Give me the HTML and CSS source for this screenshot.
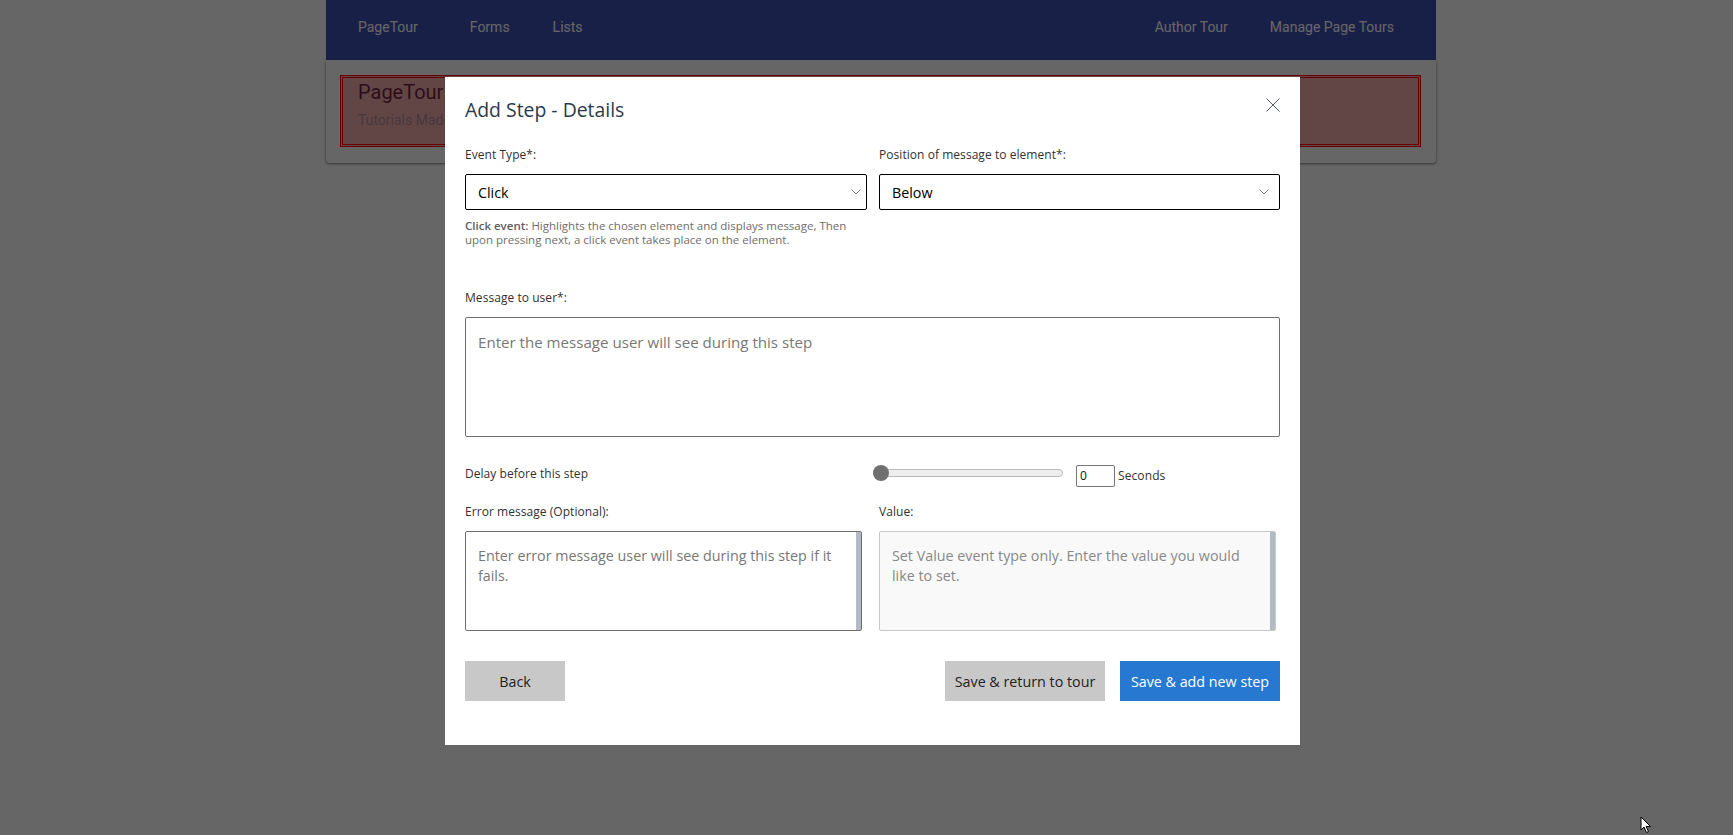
FILE: index.html
```html
<!DOCTYPE html>
<html lang="en">
<head>
<meta charset="utf-8">
<title>PageTour</title>
<link rel="stylesheet" href="styles.css">
</head>
<body>
<div class="page">
  <nav class="nav">
    <div class="nav-left">
      <a class="nav-link nav-brand">PageTour</a>
      <a class="nav-link nav-forms">Forms</a>
      <a class="nav-link">Lists</a>
    </div>
    <div class="nav-right">
      <a class="nav-link">Author Tour</a>
      <a class="nav-link">Manage Page Tours</a>
    </div>
  </nav>
  <section class="card">
    <div class="hero">
      <h1 class="hero-title">PageTour</h1>
      <p class="hero-sub">Tutorials Made Easy</p>
    </div>
  </section>
</div>

<div class="overlay">
  <div class="modal">
    <header class="modal-head">
      <h2 class="modal-title">Add Step - Details</h2>
      <svg class="close" viewBox="0 0 14 14" width="14" height="14" aria-label="Close"><path d="M.5.5l13 13M13.500.5l-13 13"/></svg>
    </header>

    <div class="row-selects">
      <div class="field">
        <div class="label">Event Type*:</div>
        <div class="select"><span>Click</span>
          <svg class="chev" viewBox="0 0 10 6" width="10" height="6"><path d="M.5.5L5 5 9.500.5"/></svg>
        </div>
        <p class="help"><b>Click event:</b> Highlights the chosen element and displays message, Then upon pressing next, a click event takes place on the element.</p>
      </div>
      <div class="field">
        <div class="label">Position of message to element*:</div>
        <div class="select"><span>Below</span>
          <svg class="chev chev-wide" viewBox="0 0 10 6" width="10" height="6"><path d="M.5.5L5 5 9.500.5"/></svg>
        </div>
      </div>
    </div>

    <div class="label">Message to user*:</div>
    <div class="area area-message">Enter the message user will see during this step</div>

    <div class="row-delay">
      <div class="label label-flat">Delay before this step</div>
      <div class="delay">
        <div class="slider"><span class="thumb"></span></div>
        <div class="num">0</div>
        <span class="seconds">Seconds</span>
      </div>
    </div>

    <div class="row-areas">
      <div class="field">
        <div class="label">Error message (Optional):</div>
        <div class="area area-small">Enter error message user will see during this step if it fails.<span class="bar"></span></div>
      </div>
      <div class="field">
        <div class="label">Value:</div>
        <div class="area area-small area-off">Set Value event type only. Enter the value you would like to set.<span class="bar"></span></div>
      </div>
    </div>

    <footer class="actions">
      <button class="btn btn-grey btn-back">Back</button>
      <button class="btn btn-grey btn-save">Save &amp; return to tour</button>
      <button class="btn btn-blue">Save &amp; add new step</button>
    </footer>
  </div>
  <svg class="cursor" viewBox="0 0 12 18" width="12" height="18"><path d="M1 1v13l3-3 2.500 5.500 2-1L6 10.500h4.500z"/></svg>
</div>
</body>
</html>
```
FILE: styles.css
```css
* { box-sizing: border-box; }
html, body { margin: 0; height: 100%; }
body {
  background: #fff;
  font-family: "Open Sans", "Noto Sans", sans-serif;
  overflow: hidden;
}
.page { width: 1110px; margin-left: 326px; }
.nav {
  height: 60px;
  background: #3f51b5;
  display: flex;
  justify-content: space-between;
  padding: 0 42px 7px 32px;
  align-items: center;
  font-family: Roboto, sans-serif;
  font-size: 14px;
}
.nav-left, .nav-right { display: flex; }
.nav-link { color: #fff; }
.nav-brand { margin-right: 52px; }
.nav-forms { margin-right: 43px; }
.nav-right { gap: 42px; }
.card {
  height: 103px;
  padding: 15px 15px 0 14px;
  background: #fff;
  border-radius: 0 0 4px 4px;
  box-shadow: 0 1px 3px rgba(0,0,0,.5);
}
.hero {
  height: 72px;
  border: 3px double #f00;
  background: #f6b0b0;
  padding: 1px 15px;
  font-family: Roboto, sans-serif;
}
.hero-title { margin: 0; font-size: 20px; font-weight: 400; line-height: 26px; color: #70253e; }
.hero-sub { margin: 7px 0 0; font-size: 14px; color: #b08c98; }

.overlay {
  position: fixed;
  inset: 0;
  background: rgba(0,0,0,.6);
}
.modal {
  position: absolute;
  left: 445px;
  top: 77px;
  width: 855px;
  height: 668px;
  background: #fff;
  padding: 0 20px;
  font-size: 12px;
  color: #323130;
}
.modal-head {
  height: 70px;
  padding-top: 19px;
  display: flex;
  justify-content: space-between;
}
.modal-title { margin: 0; font-size: 19.4px; font-weight: 400; line-height: 28px; color: #2b3a4a; }
.close { margin: 2px 0 0 0; fill: none; stroke: #5a6068; stroke-width: 1; }
.row-selects { display: grid; grid-template-columns: 402px 401px; gap: 12px; height: 143px; }
.field { min-width: 0; }
.label { font-size: 12px; line-height: 16px; height: 27px; color: #323130; letter-spacing: .05px; }
.select {
  height: 36px;
  border: 1px solid #000;
  border-radius: 2px;
  display: flex;
  align-items: center;
  justify-content: space-between;
  padding: 0 5px 0 12px;
  font-size: 14.3px;
  color: #000;
}
.chev { fill: none; stroke: #7a8088; }
.chev-wide { margin-right: 5px; }
.help { margin: 9px 0 0; font-size: 11.5px; line-height: 14px; color: #6f6d6b; }
.help b { font-weight: 600; color: #605e5c; }
.area {
  position: relative;
  border: 1px solid #6e6e6e;
  border-radius: 2px;
  padding: 14px 17px 14px 12px;
  font-size: 14.3px;
  line-height: 20px;
  color: #777;
}
.area-message { height: 120px; font-size: 15.1px; }
.row-delay { display: grid; grid-template-columns: 408px 1fr; height: 67px; padding-top: 29px; }
.label-flat { height: auto; }
.delay { display: flex; align-items: flex-start; }
.slider {
  width: 190px;
  height: 8px;
  margin-top: 3px;
  background: #eee;
  border: 1px solid #bbb;
  border-radius: 4px;
  position: relative;
}
.thumb {
  position: absolute;
  left: -1px;
  top: -5px;
  width: 16px;
  height: 16px;
  border-radius: 50%;
  background: #707070;
}
.num {
  width: 39px;
  height: 22px;
  margin: -1px 0 0 13px;
  border: 1px solid #767676;
  border-radius: 2px;
  padding-left: 3px;
  font-size: 12px;
  line-height: 20px;
  color: #111;
}
.seconds { margin: 2px 0 0 3px; font-size: 12px; letter-spacing: .1px; line-height: 16px; color: #323130; }
.row-areas { display: grid; grid-template-columns: 397px 397px; gap: 17px; height: 157px; }
.area-small { height: 100px; }
.area-off { background: #f9f9f9; border-color: #c8c8c8; color: #888; }
.bar { position: absolute; top: 0; right: 0; bottom: 0; width: 5px; background: #b3bac4; }
.actions { display: flex; gap: 15px; }
.btn {
  width: 160px;
  height: 40px;
  border: 0;
  font-family: inherit;
  font-size: 14.3px;
  padding: 0;
}
.btn-grey { background: #c8c8c8; color: #222; }
.btn-blue { background: #2678d0; color: #fff; }
.btn-back { width: 100px; margin-right: auto; }
.cursor { position: absolute; left: 1640px; top: 816px; fill: #fff; stroke: #000; }
```
